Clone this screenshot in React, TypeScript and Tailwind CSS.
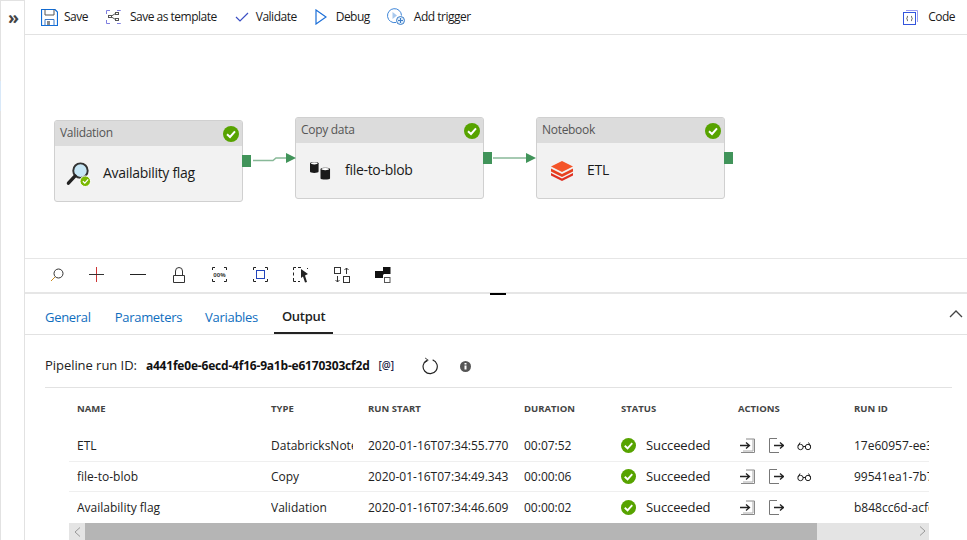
import React from "react";

const font = { fontFamily: '"Open Sans", "Noto Sans", sans-serif' };

function Check({ size = 16 }: { size?: number }) {
  return (
    <svg width={size} height={size} viewBox="0 0 16 16" className="shrink-0">
      <circle cx="8" cy="8" r="8" fill="#57a300" />
      <path d="M4 8.300 L7 11 L12 5.400" fill="none" stroke="#fff" strokeWidth="2" />
    </svg>
  );
}

function SaveIcon() {
  return (
    <svg width="17" height="17" viewBox="0 0 17 17">
      <path d="M.5.5H14L16.500 3V16.500H.5Z" fill="none" stroke="#0f6cd8" strokeWidth="1.200" />
      <path d="M4 .5V6H13V.5" fill="none" stroke="#555" />
      <path d="M4 16.500V10.500H13V16.500" fill="none" stroke="#3b78c8" />
      <rect x="6" y="12" width="3" height="4" fill="#8a8a8a" />
    </svg>
  );
}
function TemplateIcon() {
  return (
    <svg width="15" height="14" viewBox="0 0 15 14" fill="none" stroke="#7f7fe0">
      <path d="M.5 4V.5H4M11 .5h3.500V1M.5 10v3.500H4M11 13.500h3.500V13" />
      <rect x="9.500" y="2.500" width="3" height="2" stroke="#555" />
      <rect x="9.500" y="8.500" width="3" height="2" stroke="#555" />
      <rect x="2.500" y="5.500" width="3" height="2" stroke="#555" />
      <path d="M5.500 6 9.500 3.500M5.500 7 9.500 9.500" stroke="#555" />
    </svg>
  );
}
function ValidateIcon() {
  return (
    <svg width="14" height="10" viewBox="0 0 14 10" fill="none">
      <path d="M1 5 L5 9 L13 1" stroke="#3b4fc4" strokeWidth="1.200" />
    </svg>
  );
}
function DebugIcon() {
  return (
    <svg width="12" height="16" viewBox="0 0 12 16" fill="none">
      <path d="M1 1 L11 8 L1 15 Z" stroke="#1c6fd8" strokeWidth="1.200" />
    </svg>
  );
}
function TriggerIcon() {
  return (
    <svg width="19" height="18" viewBox="0 0 19 18" fill="none">
      <path d="M9 14.500A7 7 0 1 1 14.500 7.500" stroke="#3f86d8" />
      <path d="M5.500 4v7l4.500-3.500z" fill="#a9c9ee" />
      <circle cx="13.500" cy="12.500" r="4" stroke="#3f7fc8" fill="#dcebfa" />
      <path d="M13.500 10v5M11 12.500h5" stroke="#3f7fc8" />
    </svg>
  );
}
function CodeIcon() {
  return (
    <svg width="15" height="15" viewBox="0 0 15 15" fill="none">
      <path d="M3 .5H14.500V12" stroke="#9a9af0" />
      <rect x=".5" y="2.500" width="12" height="12" stroke="#3355dd" />
      <path d="M5 6c-1 0 -.5 2 -1.200 2.500C4.500 9 4 11 5 11M8 6c1 0 .5 2 1.200 2.500C8.500 9 9 11 8 11" stroke="#333" strokeWidth=".8" />
    </svg>
  );
}
function ToolItem({ icon, label, cls }: { icon: React.ReactNode; label: string; cls: string }) {
  return (
    <div className={`flex items-center ${cls}`}>
      {icon}
      <span className="text-[12px] leading-none text-[#1a1a1a] tracking-[-0.5px]">{label}</span>
    </div>
  );
}

function Magnifier() {
  return (
    <svg width="27" height="26" viewBox="2 0 26 27" className="shrink-0">
      <circle cx="16" cy="10" r="7.500" fill="#c6e6f5" stroke="#333" strokeWidth="2" />
      <path d="M10.500 15.500 L3.500 23" stroke="#222" strokeWidth="3.500" strokeLinecap="round" />
      <circle cx="21" cy="21" r="5.500" fill="#7ab800" stroke="#fff" />
      <path d="M18.500 21l2 2 3.500-4" fill="none" stroke="#fff" strokeWidth="1.300" />
    </svg>
  );
}
function Cylinders() {
  return (
    <svg width="21" height="21" viewBox="0 0 22 22" fill="#1a1a1a" className="shrink-0">
      <path d="M0 3.500C0 1.500 9 1.500 9 3.500V12C9 14 0 14 0 12Z" />
      <ellipse cx="4.500" cy="3.500" rx="3.500" ry="1.200" fill="#fff" />
      <path d="M11 9.500C11 7.500 21 7.500 21 9.500V19C21 21 11 21 11 19Z" />
      <ellipse cx="16" cy="9.500" rx="4" ry="1.200" fill="#fff" />
    </svg>
  );
}
function Layers() {
  return (
    <svg width="22" height="20" viewBox="0 0 22 20" className="shrink-0">
      <path d="M0 5.500 11 0 22 5.500 11 11Z" fill="#f4552a" />
      <path d="M0 7.500 11 13 22 7.500V10.500L11 16 0 10.500Z" fill="#e8401f" />
      <path d="M0 12 11 17.500 22 12V14.500L11 20 0 14.500Z" fill="#e02f20" />
    </svg>
  );
}

function Node({ title, label, icon, x, y, gap, iconLeft }: { title: string; label: string; icon: React.ReactNode; x: number; y: number; gap: string; iconLeft: string }) {
  return (
    <div className="absolute w-[189px] h-[82px] rounded-[3px] border border-[#d0d0d0] bg-[#f2f2f2] flex flex-col" style={{ left: x, top: y }}>
      <div className="h-[25px] bg-[#dcdcdc] rounded-t-[2px] flex items-center justify-between pl-[5px] pr-[3px] shrink-0">
        <span className="text-[12px] text-[#555] tracking-[-0.3px] pb-[2px]">{title}</span>
        <Check size={16} />
      </div>
      <div className={`flex-1 flex items-center ${iconLeft} ${gap}`}>
        {icon}
        <span className="text-[14px] text-[#1a1a1a] tracking-[-0.3px] pb-[2px]">{label}</span>
      </div>
      <div className="absolute left-[187px] top-[34px] w-[9px] h-[12px] bg-[#41945a]" />
    </div>
  );
}

function Arrow({ x, y, bent }: { x: number; y: number; bent?: boolean }) {
  return (
    <svg className="absolute" style={{ left: x, top: y }} width="44" height="12" viewBox="0 0 44 12">
      <path d={bent ? "M0 8.500H20L23 6H36" : "M0 6H36"} fill="none" stroke="#88b998" strokeWidth="1.500" />
      <path d="M33 1 L43 6 33 11Z" fill="#41945a" />
    </svg>
  );
}

function ZoomTools() {
  const s = "#222";
  return (
    <div className="h-[36px] border-t border-b-2 border-[#e6e6e6] flex items-center shrink-0 relative pb-[2px]">
      <div className="flex items-center pl-[25px] gap-[25px]">
        <svg width="14" height="14" viewBox="0 0 14 14" fill="none"><circle cx="8.500" cy="5.500" r="4.500" stroke="#333" /><path d="M5 9 1 13" stroke="#c88a20" /></svg>
        <svg width="15" height="15" viewBox="0 0 15 15"><path d="M7.500 0v15" stroke="#c33" /><path d="M0 7.500h15" stroke="#333" /></svg>
        <svg className="ml-[1px]" width="16" height="15" viewBox="0 0 16 15"><path d="M0 7.500h16" stroke={s} /></svg>
        <svg className="ml-[2px]" width="12" height="16" viewBox="0 0 12 16" fill="none" stroke="#333"><path d="M.5 15.500v-7h11v7M.5 15.500h11" /><path d="M2.500 8.500V4a3.500 3.500 0 0 1 7 0v4.500" /></svg>
        <svg className="ml-[2px]" width="15" height="15" viewBox="0 0 15 15" fill="none" stroke="#222"><path d="M.5 3V.5H3M12 .5h2.500V3M.5 12v2.500H3M12 14.500h2.500V12" /><text x="7.500" y="10" textAnchor="middle" fontSize="6" fill="#444" stroke="none" fontWeight="700" style={font}>00%</text></svg>
        <svg className="ml-[1px]" width="15" height="15" viewBox="0 0 15 15" fill="none"><path d="M.5 3V.5H3M12 .5h2.500V3M.5 12v2.500H3M12 14.500h2.500V12" stroke="#222" /><rect x="3.500" y="3.500" width="8" height="8" stroke="#2244bb" /></svg>
        <svg width="16" height="16" viewBox="0 0 16 16" fill="none"><path d="M.5 3V.5H3M5 .5h3M.5 5.500v3M.5 11v3.500H3M5 14.500h2M14.500 1V2" stroke="#222" /><path d="M8 2 15 7 12 8.500 14 15 12 15.500 10 9.500 8 11Z" fill="#222" /></svg>
        <svg width="16" height="16" viewBox="0 0 16 16" fill="none" stroke="#333"><rect x=".5" y=".5" width="6" height="6" /><rect x="9.500" y="9.500" width="6" height="6" /><path d="M12.500 7V1M10.500 3l2-2 2 2M3.500 9v6M1.500 13l2 2 2-2" /></svg>
        <svg width="16" height="16" viewBox="0 0 16 16"><rect x="0" y="4" width="8" height="7" fill="#111" /><rect x="8" y="0" width="7.500" height="7" fill="#111" /><rect x="9.500" y="10.500" width="5.500" height="5" fill="none" stroke="#555" /><path d="M8 6v2" stroke="#111" /></svg>
      </div>
      <div className="absolute left-[465px] bottom-[-3px] w-[16px] h-[2px] bg-black" />
    </div>
  );
}

function ActionIn() {
  return (
    <svg width="15" height="15" viewBox="0 0 15 15" fill="none">
      <path d="M1 14.500H14.500V1H6" stroke="#888" />
      <path d="M0 7.500H9M6 4.500 9.500 7.500 6 10.500" stroke="#222" strokeWidth="1.300" />
      <path d="M13 1V13H3" stroke="#aaa" />
    </svg>
  );
}
function ActionOut() {
  return (
    <svg width="15" height="15" viewBox="0 0 15 15" fill="none">
      <path d="M8 .5H.5V14.500H10" stroke="#777" />
      <path d="M5 7.500H14M11 4.500 14.500 7.500 11 10.500" stroke="#222" strokeWidth="1.300" />
    </svg>
  );
}
function Glasses() {
  return (
    <svg width="15" height="10" viewBox="0 0 15 10" fill="none" stroke="#222" className="-ml-[1px]">
      <circle cx="3.500" cy="6" r="2.700" />
      <circle cx="11" cy="6" r="2.700" />
      <path d="M6 5.500h3M1 5 3 1.500M13.500 5 11.500 1.500" />
    </svg>
  );
}

const columns = "grid-cols-[194px_97px_156px_97px_117px_116px_100px]";

function Row({ name, type, start, dur, id, glasses, border }: { name: string; type: string; start: string; dur: string; id: string; glasses?: boolean; border?: boolean }) {
  const cell = "overflow-hidden whitespace-nowrap";
  return (
    <div className={`grid ${columns} pl-[8px] h-[31px] items-center text-[12px] text-[#222] ${border ? "border-b border-[#efefef]" : ""}`}>
      <div className={cell}>{name}</div>
      <div className={`${cell} mr-[15px]`}>{type}</div>
      <div className={cell}>{start}</div>
      <div className={cell}>{dur}</div>
      <div className="flex items-center gap-[10px]"><Check size={15} /><span className="text-[13px] tracking-[-0.1px]">Succeeded</span></div>
      <div className="flex items-center gap-[14px] pl-[2px]">
        <ActionIn />
        <ActionOut />
        {glasses && <Glasses />}
      </div>
      <div className={cell}>{id}</div>
    </div>
  );
}

export default function App() {
  return (
    <div className="w-[967px] h-[540px] flex overflow-hidden bg-white" style={font}>
      <div className="w-[25px] h-full shrink-0 border-l border-r border-t border-[#e2e2e2] flex flex-col items-center pt-[7px] pl-[1px] relative">
        <span className="text-[18px] leading-none font-bold text-[#444] tracking-[-1px]">»</span>
        <div className="absolute left-[-1px] top-[80px] w-[1px] h-[30px] bg-[#d8e8f8]" />
      </div>
      <div className="flex-1 flex flex-col min-w-0">
        <div className="h-[35px] border-b border-[#e2e2e2] flex items-center justify-between shrink-0 pl-[16px] pr-[12px]">
          <div className="flex items-center">
            <ToolItem icon={<SaveIcon />} label="Save" cls="gap-[6px] mr-[18px]" />
            <ToolItem icon={<TemplateIcon />} label="Save as template" cls="gap-[9px] mr-[18px]" />
            <ToolItem icon={<ValidateIcon />} label="Validate" cls="gap-[7px] mr-[18px]" />
            <ToolItem icon={<DebugIcon />} label="Debug" cls="gap-[9px] mr-[17px]" />
            <ToolItem icon={<TriggerIcon />} label="Add trigger" cls="gap-[8px]" />
          </div>
          <ToolItem icon={<CodeIcon />} label="Code" cls="gap-[10px]" />
        </div>
        <div className="relative h-[223px] shrink-0">
          <Node title="Validation" label="Availability flag" icon={<Magnifier />} x={29} y={85} gap="gap-[10px]" iconLeft="pl-[11px]" />
          <Node title="Copy data" label="file-to-blob" icon={<Cylinders />} x={270} y={82} gap="gap-[14px]" iconLeft="pl-[14px]" />
          <Node title="Notebook" label="ETL" icon={<Layers />} x={511} y={82} gap="gap-[14px]" iconLeft="pl-[14px]" />
          <Arrow x={228} y={117} bent />
          <Arrow x={468} y={117} />
        </div>
        <ZoomTools />
        <div className="h-[41px] border-b border-[#e2e2e2] shrink-0 flex items-stretch pl-[20px] pt-[7px] text-[13px] relative tracking-[-0.3px]">
          <div className="flex items-center text-[#106ebe] mr-[24px]">General</div>
          <div className="flex items-center text-[#106ebe] mr-[23px]">Parameters</div>
          <div className="flex items-center text-[#106ebe] mr-[16px]">Variables</div>
          <div className="flex items-center text-[#222] font-semibold px-[8px] border-b-2 border-[#222]">Output</div>
          <svg className="absolute right-[4px] top-[16px]" width="14" height="8" viewBox="0 0 14 8" fill="none"><path d="M1 7 7 1 13 7" stroke="#444" strokeWidth="1.300" /></svg>
        </div>
        <div className="flex-1 min-h-0 flex flex-col pl-[20px] pr-[15px]">
          <div className="h-[53px] pt-[10px] border-b border-[#e2e2e2] flex items-center shrink-0">
            <span className="text-[13px] text-[#222] tracking-[-0.05px] mr-[9px]">Pipeline run ID:</span>
            <span className="text-[12px] font-bold text-[#111] tracking-[-0.2px] mr-[9px] -mt-[1px]">a441fe0e-6ecd-4f16-9a1b-e6170303cf2d</span>
            <span className="text-[10px] text-[#224] font-semibold mr-[28px] -mt-[2px]">[@]</span>
            <svg width="16" height="18" viewBox="0 0 18 19" fill="none" className="mr-[22px]"><path d="M5.500 3A8 8 0 1 0 12 2.600" stroke="#222" strokeWidth="1.300" /><path d="M3.500 0.500 7 3 3.500 5.500" stroke="#222" fill="none" /></svg>
            <svg width="11" height="11" viewBox="0 0 11 11"><circle cx="5.500" cy="5.500" r="5.500" fill="#555" /><rect x="4.500" y="4.500" width="2" height="4" fill="#fff" /><rect x="4.500" y="2" width="2" height="1.500" fill="#fff" /></svg>
          </div>
          <div className="ml-[24px] w-[860px] flex-1 min-h-0 flex flex-col overflow-hidden">
            <div className={`grid ${columns} pl-[8px] h-[41px] pt-[1px] items-center text-[9.500px] font-bold text-[#444] shrink-0`}>
              {["NAME", "TYPE", "RUN START", "DURATION", "STATUS", "ACTIONS", "RUN ID"].map((h) => (
                <div key={h}>{h}</div>
              ))}
            </div>
            <div className="h-[2px] shrink-0" />
            <Row name="ETL" type="DatabricksNotebook" start="2020-01-16T07:34:55.770" dur="00:07:52" id="17e60957-ee3a" glasses border />
            <Row name="file-to-blob" type="Copy" start="2020-01-16T07:34:49.343" dur="00:00:06" id="99541ea1-7b7c" glasses border />
            <Row name="Availability flag" type="Validation" start="2020-01-16T07:34:46.609" dur="00:00:02" id="b848cc6d-acfe" />
            <div className="h-[17px] bg-[#e4e4e4] flex items-stretch justify-between shrink-0 mt-auto relative">
              <div className="w-[16px] flex items-center justify-center"><svg width="7" height="10" viewBox="0 0 7 10" fill="none"><path d="M6 .5 1 5l5 4.500" stroke="#999" /></svg></div>
              <div className="flex-1 bg-[#b5b5b5] mr-[112px]" />
              <div className="absolute right-[3px] top-[3px]"><svg width="7" height="10" viewBox="0 0 7 10" fill="none"><path d="M1 .5 6 5 1 9.500" stroke="#999" /></svg></div>
            </div>
          </div>
        </div>
      </div>
    </div>
  );
}
